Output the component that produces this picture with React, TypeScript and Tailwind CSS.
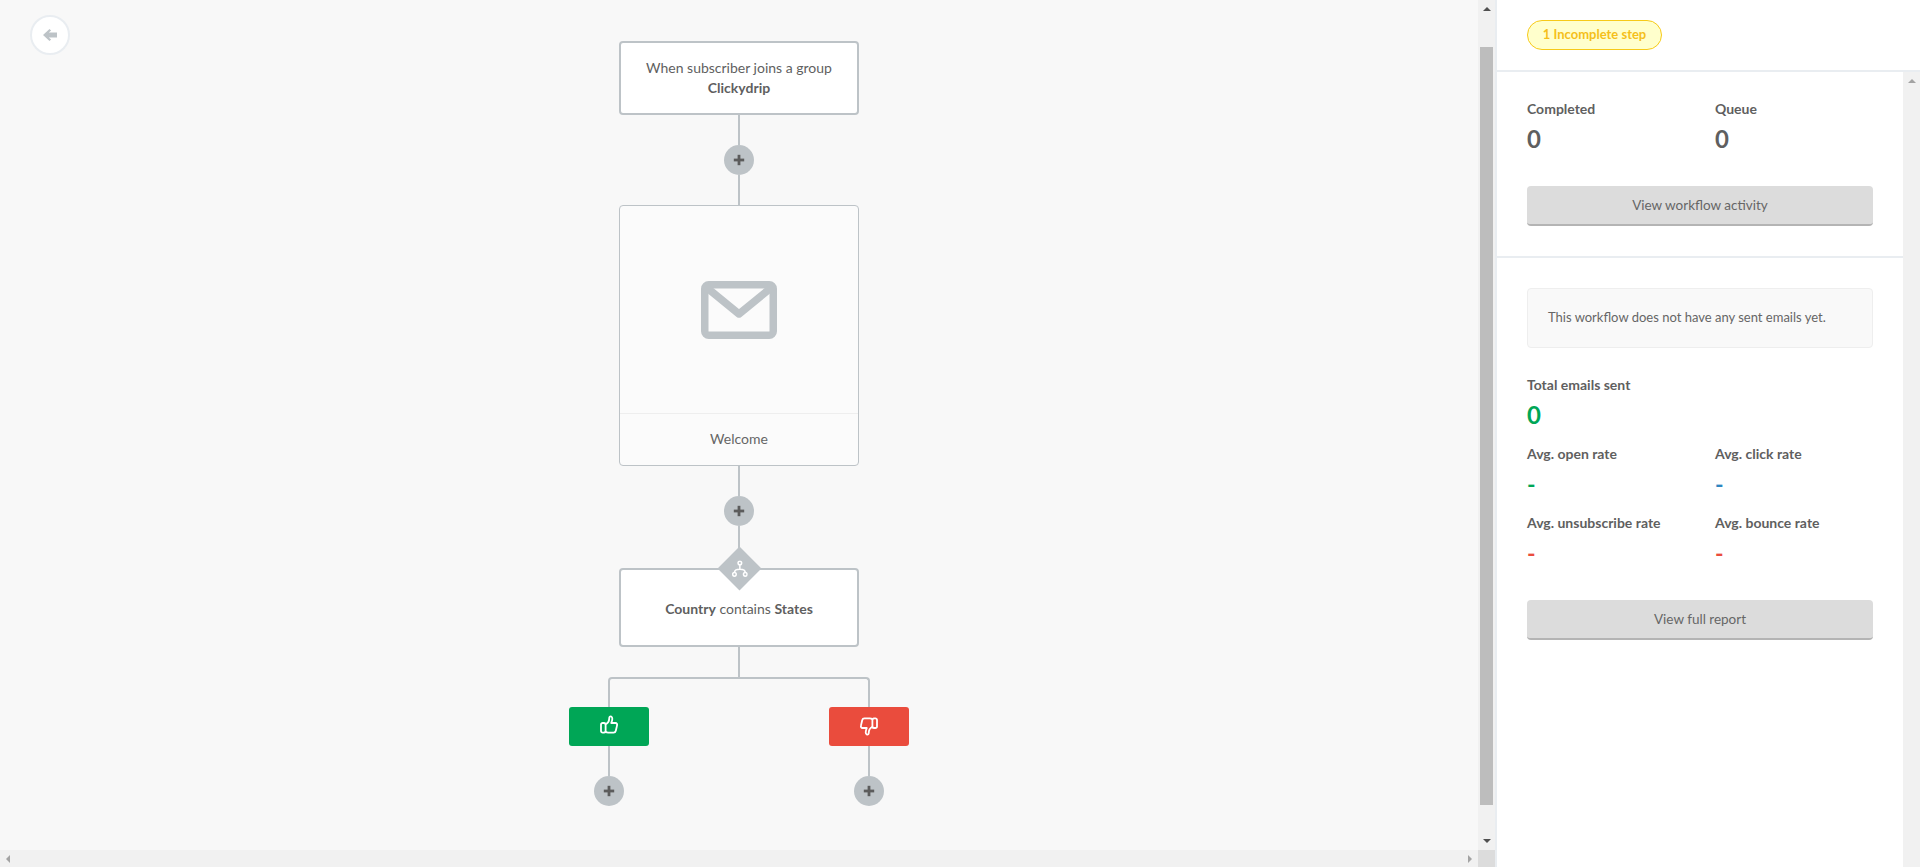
import React from "react";

const font = { fontFamily: '"Lato", "Open Sans", sans-serif' };

function VLine({ h }: { h: string }) {
  return <div className={`w-[2px] bg-[#bdc3c7] ${h}`} />;
}

function VLine30() {
  return <div className="h-[30px] w-[2px] bg-[#bdc3c7]" />;
}

function Plus() {
  return (
    <div className="flex h-[30px] w-[30px] items-center justify-center rounded-full bg-[#bdc3c7]">
      <svg width="12" height="12" viewBox="0 0 12 12" fill="#5c5c5c">
        <rect x="4.6" y="0.8" width="2.8" height="10.4" />
        <rect x="0.8" y="4.6" width="10.4" height="2.8" />
      </svg>
    </div>
  );
}

function Thumb({ down }: { down?: boolean }) {
  return (
    <svg width="18" height="19" viewBox="0 0 18 19" fill="none" stroke="#fff" strokeWidth="1.8" strokeLinejoin="round" strokeLinecap="round" className={down ? "rotate-180" : "mb-[4px]"}>
      <rect x="1" y="8" width="4.6" height="9.6" rx="1.6" />
      <path d="M5.6 9.2C7.6 8.2 9.2 6.2 9.2 3.4C9.2 1.6 10.2 1 11.2 1.5C12.4 2.2 12.4 5.2 11.2 8H15.4C16.8 8 17.4 9.2 17 10.6L15.8 15.8C15.5 17 14.6 17.6 13.6 17.6H8.2C7 17.6 6.2 17.2 5.6 16.6" />
    </svg>
  );
}

function Branch({ color, down }: { color: string; down?: boolean }) {
  return (
    <div className="flex w-[80px] flex-col items-center">
      <div className={`flex h-[39px] w-[80px] items-center justify-center rounded-[3px] ${color}`}>
        <Thumb down={down} />
      </div>
      <VLine30 />
      <Plus />
    </div>
  );
}

function Tri({ dir, color }: { dir: "up" | "down" | "left" | "right"; color: string }) {
  const pts = { up: "4,0 8,4 0,4", down: "0,0 8,0 4,4", left: "4,0 4,8 0,4", right: "0,0 4,4 0,8" }[dir];
  const w = dir === "up" || dir === "down" ? 8 : 4;
  const h = dir === "up" || dir === "down" ? 4 : 8;
  return (
    <svg width={w} height={h} viewBox={`0 0 ${w} ${h}`}>
      <polygon points={pts} fill={color} />
    </svg>
  );
}

function Stat({ label, value, color, big }: { label: string; value: string; color: string; big?: boolean }) {
  return (
    <div className="flex flex-col">
      <div className="h-[20px] text-[14px] font-bold leading-[20px] text-[#5f5f5f]">{label}</div>
      <div className={big ? `mt-[5px] h-[30px] text-[24px] font-bold leading-[30px] ${color}` : `mt-[6px] h-[30px] text-[23px] font-bold leading-[28px] ${color}`}>{value}</div>
    </div>
  );
}

function GrayButton({ children }: { children: React.ReactNode }) {
  return (
    <div className="flex h-[40px] w-full items-center justify-center rounded-[4px] border-b-2 border-[#b4b4b4] bg-[#dcdcdc] pt-[1px] text-[13.5px] text-[#666]">
      {children}
    </div>
  );
}

export default function App() {
  return (
    <div style={font} className="flex h-[867px] w-[1920px] overflow-hidden bg-white text-[#5f5f5f]">
      <div className="flex h-full w-[1495px] flex-col">
        <div className="flex h-[850px]">
          <div className="relative flex w-[1478px] flex-col items-center overflow-hidden bg-[#f8f8f8] pt-[41px]">
            <div className="absolute left-[30px] top-[15px] flex h-[40px] w-[40px] items-center justify-center rounded-full border-2 border-[#e9edf1] bg-white">
              <svg width="14" height="12" viewBox="0 0 14 12" fill="#bdc3c7">
                <path d="M6.5 0L0 6l6.5 6 1.6-1.6L5.8 8.5H14v-5H5.8l2.3-1.9z" />
              </svg>
            </div>

            <div className="flex h-[74px] w-[240px] flex-col items-center justify-center rounded-[4px] border-2 border-[#bdc3c7] bg-white text-[14px] leading-[20px]">
              <div>When subscriber joins a group</div>
              <div className="font-bold">Clickydrip</div>
            </div>
            <VLine30 />
            <Plus />
            <VLine30 />

            <div className="flex h-[261px] w-[240px] flex-col rounded-[4px] border border-[#bdc3c7] bg-[#fbfbfb]">
              <div className="flex h-[208px] items-center justify-center border-b border-[#eeeeee]">
                <svg width="76" height="58" viewBox="0 0 76 58" fill="none" stroke="#bdc3c7" strokeWidth="7.5" strokeLinejoin="round" strokeLinecap="round">
                  <rect x="3.75" y="3.75" width="68.5" height="50.5" rx="4" />
                  <path d="M5 6L38 33L71 6" />
                </svg>
              </div>
              <div className="flex flex-1 items-center justify-center pb-[3px] text-[14px] text-[#666]">Welcome</div>
            </div>
            <VLine30 />
            <Plus />
            <VLine h="h-[42px]" />

            <div className="relative flex h-[79px] w-[240px] items-center justify-center rounded-[4px] border-2 border-[#bdc3c7] bg-white pt-[2px] text-[14px]">
              <div className="absolute left-[102.5px] top-[-17px] flex h-[31px] w-[31px] rotate-45 items-center justify-center bg-[#bdc3c7]">
                <svg width="16" height="17" viewBox="0 0 16 17" fill="none" stroke="#fff" strokeWidth="1.5" className="-rotate-45">
                  <circle cx="8" cy="2.6" r="1.8" />
                  <circle cx="2.6" cy="14" r="1.8" />
                  <circle cx="13.4" cy="14" r="1.8" />
                  <path d="M8 4.4V9M2.6 12.2C2.6 10 4 9 8 9C12 9 13.4 10 13.4 12.2" />
                </svg>
              </div>
              <span>
                <b>Country</b> contains <b>States</b>
              </span>
            </div>
            <div className="h-[30px] w-[2px] bg-[#bdc3c7]" />
            <div className="h-[30px] w-[262px] rounded-t-[4px] border-2 border-b-0 border-[#bdc3c7]" />
            <div className="flex w-[340px] justify-between">
              <Branch color="bg-[#00a656]" />
              <Branch color="bg-[#ea4c3d]" down />
            </div>
          </div>

          <div className="flex w-[17px] flex-col items-center bg-[#f1f1f1]">
            <div className="mt-[7px] flex"><Tri dir="up" color="#505050" /></div>
            <div className="mt-[36px] h-[758px] w-[13px] shrink-0 bg-[#bdbdbd]" />
            <div className="mt-[34px] flex"><Tri dir="down" color="#505050" /></div>
          </div>
        </div>

        <div className="flex h-[17px]">
          <div className="flex w-[1478px] items-center justify-between bg-[#f1f1f1] px-[6px]">
            <Tri dir="left" color="#a3a3a3" />
            <Tri dir="right" color="#a3a3a3" />
          </div>
          <div className="w-[17px] bg-[#dcdcdc]" />
        </div>
      </div>

      <div className="flex h-full flex-1 flex-col border-l-2 border-[#e9edf1]">
        <div className="h-[72px] shrink-0 border-b-2 border-[#e9edf1] pl-[30px] pt-[20px]">
          <div className="flex h-[30px] w-[135px] items-center justify-center rounded-full border border-[#f7ca18] bg-[#ffffcc] text-[13px] font-bold text-[#f5bf1b]">
            1 Incomplete step
          </div>
        </div>

        <div className="flex flex-1">
          <div className="flex-1">
            <div className="h-[186px] border-b-2 border-[#e9edf1] px-[30px] pt-[27px]">
              <div className="grid grid-cols-[188px_1fr]">
                <Stat label="Completed" value="0" color="text-[#5f5f5f]" big />
                <Stat label="Queue" value="0" color="text-[#5f5f5f]" big />
              </div>
              <div className="mt-[32px]">
                <GrayButton>View workflow activity</GrayButton>
              </div>
            </div>

            <div className="px-[30px] pt-[30px]">
              <div className="flex h-[60px] items-center rounded-[4px] border border-[#eeeeee] bg-[#f9f9f9] pl-[20px] text-[13px] text-[#666]">
                This workflow does not have any sent emails yet.
              </div>
              <div className="mt-[27px]">
                <Stat label="Total emails sent" value="0" color="text-[#00a656]" big />
              </div>
              <div className="mt-[14px] grid grid-cols-[188px_1fr] gap-y-[13px]">
                <Stat label="Avg. open rate" value="-" color="text-[#00a656]" />
                <Stat label="Avg. click rate" value="-" color="text-[#2e86c1]" />
                <Stat label="Avg. unsubscribe rate" value="-" color="text-[#ea4c3d]" />
                <Stat label="Avg. bounce rate" value="-" color="text-[#ea4c3d]" />
              </div>
              <div className="mt-[31px]">
                <GrayButton>View full report</GrayButton>
              </div>
            </div>
          </div>
          <div className="flex w-[17px] flex-col items-center bg-[#f1f1f1] pt-[7px]">
            <Tri dir="up" color="#a3a3a3" />
          </div>
        </div>
      </div>
    </div>
  );
}
